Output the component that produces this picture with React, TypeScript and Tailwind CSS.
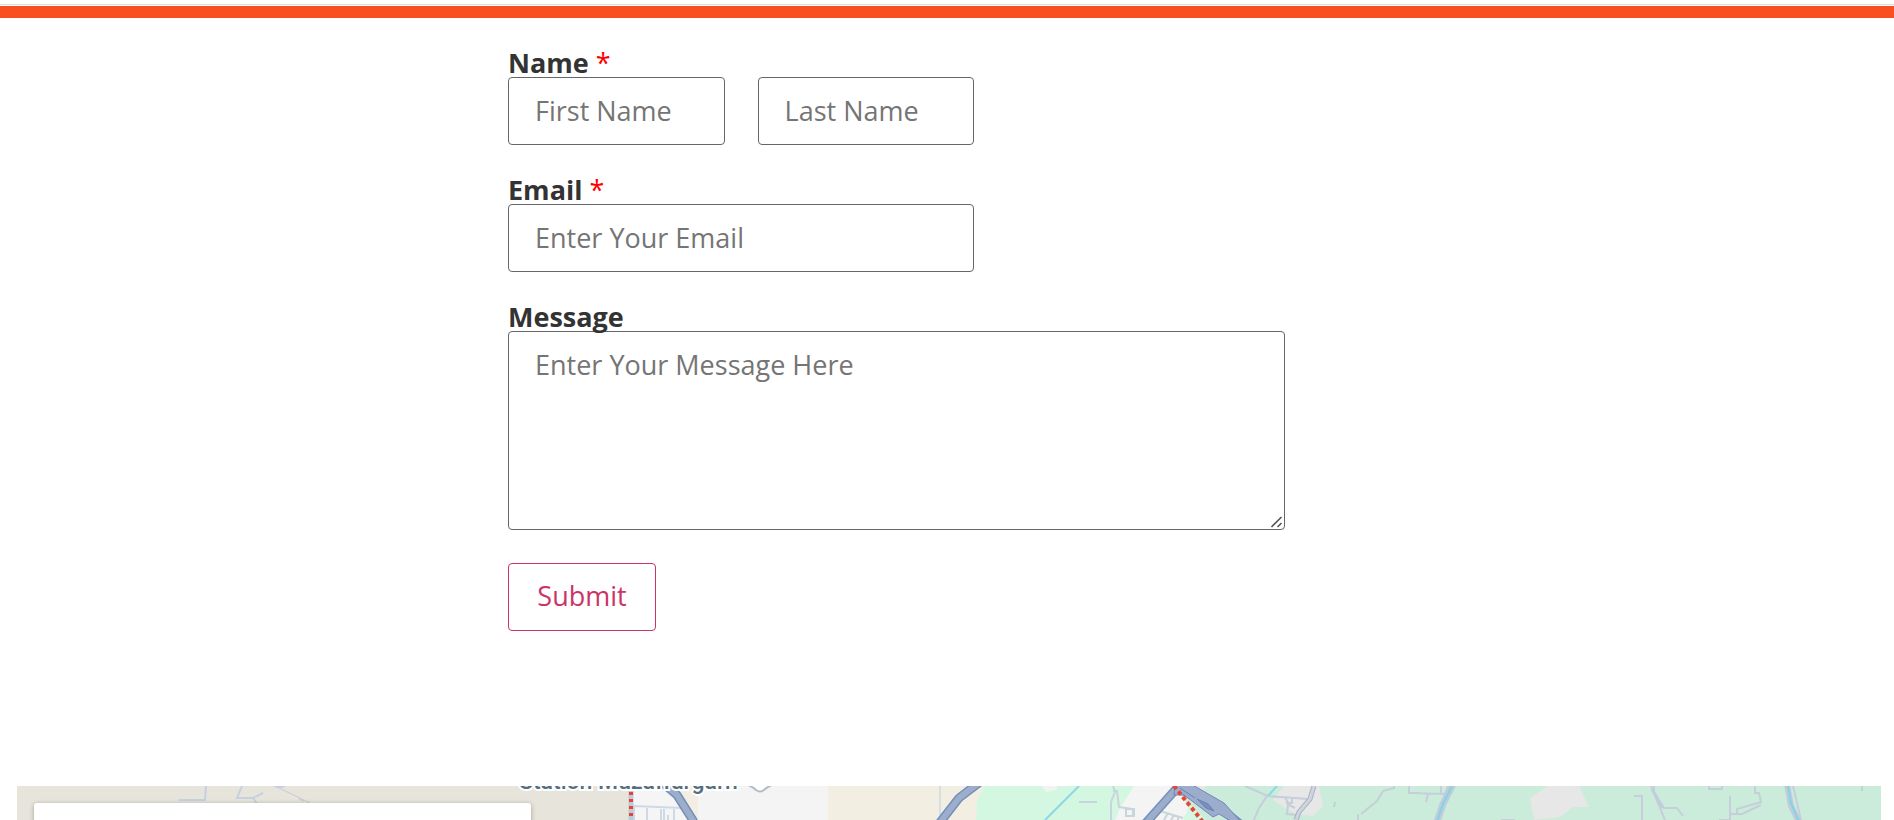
import React from "react";

const field =
  "h-[68px] w-full min-w-0 rounded-[4px] border border-[#666] bg-white px-[26px] pb-[2px] text-[27px] text-[#333] outline-none placeholder:text-[#757575]";
const labelText = "block h-[26px] text-[27px] leading-[24px] font-bold text-[#333]";

function Required() {
  return <span className="font-normal text-[#f00]"> *</span>;
}

function ContactForm() {
  return (
    <form
      className="flex w-full max-w-[777px] flex-col gap-[33px]"
      onSubmit={(e) => e.preventDefault()}
    >
      <div className="w-3/5">
        <label htmlFor="first-name" className={labelText}>
          Name
          <Required />
        </label>
        <div className="grid grid-cols-2 gap-[33px]">
          <input id="first-name" type="text" placeholder="First Name" className={field} />
          <input aria-label="Last Name" type="text" placeholder="Last Name" className={field} />
        </div>
      </div>
      <div className="w-3/5">
        <label htmlFor="email" className={labelText}>
          Email
          <Required />
        </label>
        <input id="email" type="email" placeholder="Enter Your Email" className={field} />
      </div>
      <div className="relative">
        <label htmlFor="message" className={labelText}>
          Message
        </label>
        <textarea
          id="message"
          placeholder="Enter Your Message Here"
          className="block h-[199px] w-full resize-none rounded-[4px] border border-[#666] bg-white px-[26px] py-[13px] text-[27px] leading-[40px] text-[#333] outline-none placeholder:text-[#757575]"
        />
        <svg
          viewBox="0 0 12 12"
          aria-hidden="true"
          className="pointer-events-none absolute right-[2px] bottom-[2px] size-3"
          stroke="#555"
          strokeWidth="1.6"
        >
          <path d="M0.5 11L10.5 1M6.5 11L10.5 7" />
        </svg>
      </div>
      <button
        type="submit"
        className="h-[68px] w-[148px] rounded-[4px] border border-[#cc3366] pb-[2px] text-[27px] text-[#cc3366]"
      >
        Submit
      </button>
    </form>
  );
}

function MapStrip() {
  return (
    <section aria-label="Map" className="relative h-[34px] overflow-hidden bg-[#e7e4dc]">
      <svg
        viewBox="17 786 1864 34"
        preserveAspectRatio="xMinYMin slice"
        className="block h-full w-full"
        fill="none"
      >
        <path d="M17 786H631V820H17z" fill="#e7e4dc" />
        <path d="M631 786H698V820H631z" fill="#f5f5f5" />
        <path d="M673 786H698V820H692L673 791z" fill="#f3eee2" />
        <path d="M698 786H828V820H698z" fill="#f4f4f4" />
        <path d="M828 786H990V820H828z" fill="#f3eee2" />
        <path d="M984 786H1160V820H976L977 800Z" fill="#d3f7e1" />
        <path d="M1041 786H1056L1058 789L1047 792z" fill="#f3f3f3" />
        <path d="M1134 786H1206L1199 800L1183 820H1115L1120 808z" fill="#f4f4f4" />
        <path d="M1174 786H1881V820H1194L1187 804z" fill="#cbecdb" />
        <path d="M1190 805L1206 820H1183z" fill="#d3f7e1" />
        <path d="M1205 786H1179L1202 800z" fill="#e7e7e7" />
        <path d="M1284 786H1319L1323 806L1313 816L1297 814L1285 808L1273 800z" fill="#e7e7e7" />
        <path d="M1548 786H1579L1589 807H1573L1560 817L1534 820L1530 798z" fill="#e7e7e7" />

        <g stroke="#c5d1df" strokeWidth="2">
          <path d="M179 800H205L206 786M242 786L237 798H253L263 793M253 798L257 804" />
          <path d="M275 786L310 803M299 799L304 801" strokeWidth="1" stroke="#c3c9d8" />
          <path d="M273 786H286L282 788H277z" fill="#c5d1df" stroke="none" />
          <path d="M634 820V806L682 808M647 806V820M661 807V820M664 807V820M674 808V820M668 815V820" stroke="#cfd9e5" />
          <path d="M940 786V811M940 786V820" stroke="#d7dfe6" />
          <path d="M1079 802H1097M1113 786L1115 792L1111 802V820M1113 791L1117 791L1119 807L1133 809V816H1126V809M1127 816H1134V809H1126M1160 811L1183 818M1168 813L1164 820M1174 815L1171 820M1178 817V820" stroke="#c9d5dc" />
        </g>
        <path d="M1079 786L1045 820M1277 786L1268 796" stroke="#8bd8e9" strokeWidth="2" />
        <g stroke="#c5ced9" strokeWidth="2">
          <path d="M1245 786L1268 796L1308 799M1267 796L1259 808L1254 820M1285 797L1289 805L1295 808M1292 797V803H1286M1288 804L1287 814L1297 815" />
          <path d="M1361 814L1377 801L1383 791L1394 788V786M1358 814V820M1335 802L1334 807M1409 786V793H1420M1410 793L1445 794L1448 786M1441 786V793M1428 794L1426 802" />
          <path d="M1634 796H1642V820M1651 786L1665 820M1654 786V793L1664 808H1677L1683 816M1709 786V789H1722V786M1755 786V793H1759L1761 802L1737 809V814H1742L1761 805M1730 796V820M1730 814H1742M1719 820H1730M1862 786V791M1501 820H1515M1793 786L1801 820" />
        </g>
        <path d="M1652 789L1663 808" stroke="#c3ccda" strokeWidth="3" />
        <path d="M1314 786L1310 799L1299 812L1296 820" stroke="#a8b3c0" strokeWidth="5" />
        <path d="M1314 786L1310 799L1299 812L1296 820" stroke="#cfd5dd" strokeWidth="3" />
        <path d="M1453 784L1443 804L1437 822" stroke="#c1ccd9" strokeWidth="7" />
        <path d="M1453 784L1443 804L1437 822" stroke="#83d3e8" strokeWidth="2" />
        <path d="M1787 784L1791 806L1799 822" stroke="#c1ccd9" strokeWidth="6" />
        <path d="M1788 786L1791 803L1799 822" stroke="#83d3e8" strokeWidth="2" />

        <g strokeLinejoin="round">
          <path d="M664 784L677 795L694 822M980 782L959 798L938 825M1144 825L1177 788L1218 806L1240 824" stroke="#738fbd" strokeWidth="9" />
          <path d="M664 784L677 795L694 822M980 782L959 798L938 825M1144 825L1177 788L1218 806L1240 824" stroke="#9caeca" strokeWidth="6" />
          <path d="M1175 784H1191L1224 803L1241 822H1232L1219 814L1213 817L1184 795H1174z" fill="#9baccc" stroke="#6f89b5" strokeWidth="1" />
          <path d="M1180 788L1195 798M1197 799L1208 804L1214 811L1206 808z" stroke="#6684b5" strokeWidth="1" fill="#7890b8" />
        </g>
        <path d="M631 790V820" stroke="#bdcbd8" strokeWidth="5" />
        <path d="M631 792V820" stroke="#ea4335" strokeWidth="4" strokeDasharray="3 4" />
        <path d="M1174 786L1203 822" stroke="#ea4335" strokeWidth="4" strokeDasharray="4 3" />
        <text
          x="519"
          y="789"
          fill="#547080"
          stroke="white"
          strokeWidth="4"
          paintOrder="stroke"
          className="font-['Roboto',sans-serif] text-[23px] font-medium"
        >
          Station Muzaffargarh
        </text>
        <path
          d="M748 785Q753 787 756 790Q760 793 764 790Q767 787 772 785z"
          fill="white"
          stroke="#b3bdc5"
          strokeWidth="2"
        />
      </svg>
      <div className="absolute top-[17px] left-[17px] h-[100px] w-[497px] rounded-[3px] bg-white shadow-[0_1px_5px_rgba(0,0,0,0.3)]" />
    </section>
  );
}

export default function App() {
  return (
    <main className="bg-white font-['Open_Sans','Noto_Sans',sans-serif]">
      <header className="pt-1">
        <div className="h-px bg-[#ddd]" />
        <div className="mt-px h-3 bg-[#f95021]" />
      </header>
      <div className="mx-auto w-full max-w-[878px] pt-[33px]">
        <ContactForm />
      </div>
      <div className="pt-[155px] pr-[13px] pl-[17px]">
        <MapStrip />
      </div>
    </main>
  );
}
